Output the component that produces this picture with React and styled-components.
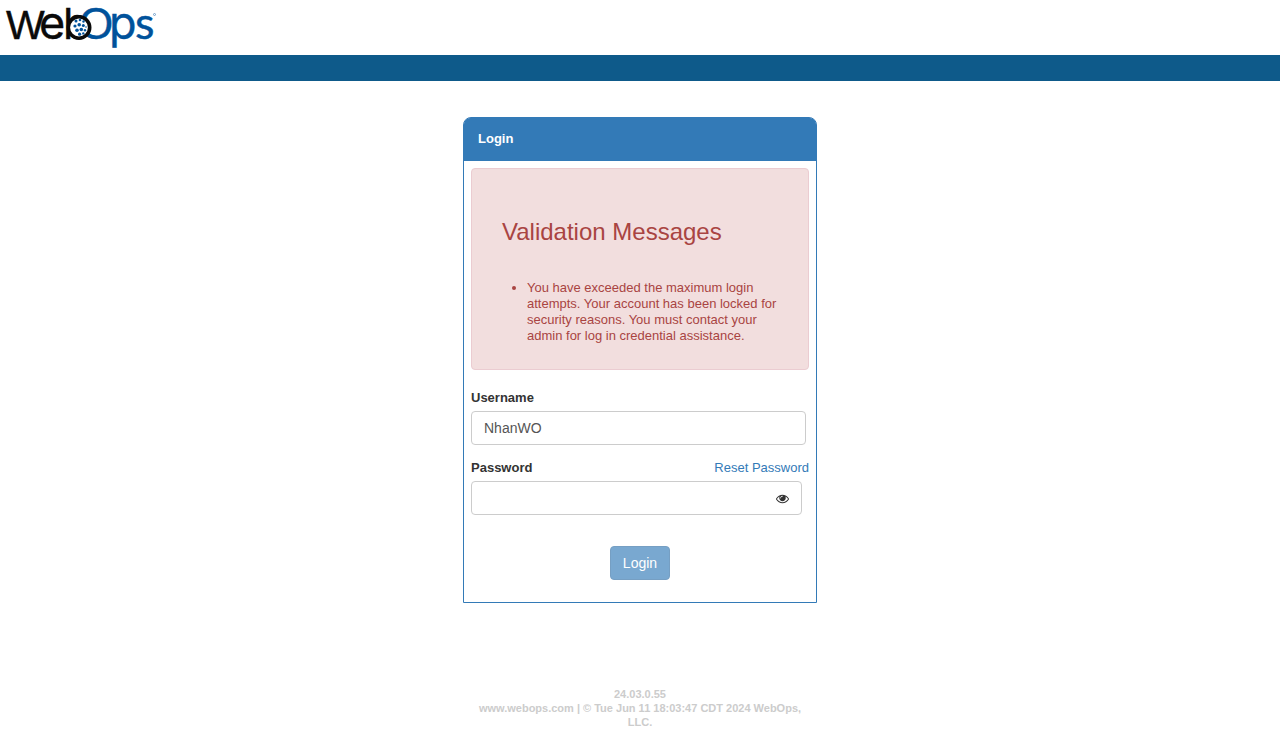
import React, { useState } from "react";
import styled, { createGlobalStyle } from "styled-components";

const GlobalStyle = createGlobalStyle`
  *, *::before, *::after { box-sizing: border-box; }
  body {
    margin: 0;
    background: #fff;
    color: #333;
    font: 13px/16px "Liberation Sans", Arial, Helvetica, sans-serif;
  }
`;

const Header = styled.header`
  display: flex;
  height: 55px;
`;

const LogoMark = styled.svg`
  overflow: visible;
  font-family: Inter, sans-serif;
  font-size: 45px;
`;

const NavBar = styled.nav`
  height: 26px;
  background: #0e5a8a;
`;

const Main = styled.main`
  display: flex;
  flex-direction: column;
  align-items: center;
  padding-top: 36px;
`;

const Panel = styled.section`
  width: 354px;
  max-width: 100%;
  border: 1px solid #337ab7;
  border-radius: 8px 8px 0 0;
`;

const PanelTitle = styled.h1`
  margin: 0;
  padding: 13px 14px 14px;
  background: #337ab7;
  border-radius: 6px 6px 0 0;
  color: #fff;
  font-size: 13px;
  line-height: 16px;
`;

const PanelBody = styled.form`
  padding: 7px 7px 22px;
`;

const Alert = styled.div`
  padding: 50px 30px 25px;
  border: 1px solid #ebccd1;
  border-radius: 4px;
  background: #f2dede;
  color: #a94442;
`;

const AlertTitle = styled.h2`
  margin: 0 0 35px;
  font-size: 24px;
  font-weight: 400;
  line-height: 26px;
`;

const AlertList = styled.ul`
  margin: 0;
  padding-left: 25px;
`;

const Field = styled.div`
  margin-top: ${(p) => p.$gap};
`;

const FieldHead = styled.div`
  display: flex;
  justify-content: space-between;
  margin-bottom: 5px;
`;

const Label = styled.label`
  font-weight: 700;
`;

const ResetLink = styled.a`
  color: #337ab7;
  text-decoration: none;
`;

const InputBox = styled.div`
  display: flex;
  align-items: center;
  height: 34px;
  margin-right: ${(p) => p.$inset};
  border: 1px solid #ccc;
  border-radius: 4px;
`;

const Input = styled.input`
  flex: 1;
  min-width: 0;
  height: 100%;
  padding: 0 12px;
  border: 0;
  outline: 0;
  background: transparent;
  color: #555;
  font: 14px/20px "Liberation Sans", Arial, sans-serif;
`;

const EyeButton = styled.button`
  display: flex;
  margin-right: 12px;
  padding: 0;
  border: 0;
  background: none;
  color: #333;
  cursor: pointer;
`;

const Actions = styled.div`
  display: flex;
  justify-content: center;
  margin-top: 31px;
`;

const LoginButton = styled.button`
  width: 60px;
  height: 34px;
  padding: 0;
  border: 1px solid #2e6da4;
  border-radius: 4px;
  background: #337ab7;
  color: #fff;
  font: 14px/20px "Liberation Sans", Arial, sans-serif;
  opacity: 0.65;
`;

const Footer = styled.footer`
  width: 324px;
  max-width: 100%;
  margin-top: 84px;
  color: #ccc;
  font-size: 11px;
  font-weight: 700;
  line-height: 14px;
  text-align: center;
`;

const dots = [
  [76, 21, 1.5], [80, 20, 1.3], [83.5, 21.5, 1.2],
  [75, 26, 1.6], [79.2, 24.8, 1.8], [83.3, 25.5, 1.5], [86, 27, 0.8],
  [77, 30.3, 1.8], [81.3, 29.5, 1.8], [85, 30.3, 1.2],
  [79.6, 34.2, 1.6], [83.3, 33.4, 1.2],
];

function Logo() {
  return (
    <LogoMark width="160" height="55" viewBox="0 0 160 55" role="img" aria-label="WebOps">
      <g fill="#0a0a0a" stroke="#0a0a0a" strokeWidth="0.4">
        <text x="6" y="39" fontFamily="Liberation Sans, sans-serif" fontSize="41">W</text>
        <text x="39" y="39">e</text>
        <text x="63" y="39" fontSize="43">b</text>
      </g>
      <g fill="#00529b" stroke="#00529b" strokeWidth="0.4">
        <text x="79" y="39" fontFamily="Liberation Sans, sans-serif" fontSize="44">O</text>
        <text x="109" y="39">p</text>
        <text x="135" y="39" fontFamily="Lato, sans-serif">s</text>
      </g>
      <circle cx="79" cy="27.500" r="10.700" fill="#fff" stroke="#0a0a0a" strokeWidth="3.600" />
      <g fill="#00529b">
        {dots.map(([x, y, r]) => <circle key={`${x}-${y}`} cx={x} cy={y} r={r} />)}
      </g>
      <circle cx="154.500" cy="14.500" r="1" fill="none" stroke="#5b8fc0" strokeWidth="0.8" />
    </LogoMark>
  );
}

function Eye() {
  return (
    <svg width="13" height="13" viewBox="0 0 1792 1792" fill="currentColor" aria-hidden="true">
      <path d="M1664 960q-152-236-381-353 61 104 61 225 0 185-131.500 316.500t-316.500 131.500-316.500-131.500-131.500-316.500q0-121 61-225-229 117-381 353 133 205 333.500 326.500t434.500 121.500 434.500-121.500 333.500-326.500zm-720-384q0-20-14-34t-34-14q-125 0-214.500 89.500t-89.500 214.500q0 20 14 34t34 14 34-14 14-34q0-86 61-147t147-61q20 0 34-14t14-34zm848 384q0 34-20 69-140 230-376.500 368.500t-499.500 138.500-499.500-139-376.500-368q-20-35-20-69t20-69q140-229 376.500-368t499.500-139 499.500 139 376.500 368q20 35 20 69z" />
    </svg>
  );
}

export default function App() {
  const [visible, setVisible] = useState(false);
  return (
    <>
      <GlobalStyle />
      <Header><Logo /></Header>
      <NavBar aria-label="Main" />
      <Main>
        <Panel>
          <PanelTitle>Login</PanelTitle>
          <PanelBody onSubmit={(e) => e.preventDefault()}>
            <Alert role="alert">
              <AlertTitle>Validation Messages</AlertTitle>
              <AlertList>
                <li>
                  You have exceeded the maximum login attempts. Your account has been
                  locked for security reasons. You must contact your admin for log in
                  credential assistance.
                </li>
              </AlertList>
            </Alert>
            <Field $gap="20px">
              <FieldHead>
                <Label htmlFor="username">Username</Label>
              </FieldHead>
              <InputBox $inset="3px">
                <Input id="username" type="text" defaultValue="NhanWO" />
              </InputBox>
            </Field>
            <Field $gap="15px">
              <FieldHead>
                <Label htmlFor="password">Password</Label>
                <ResetLink href="#reset">Reset Password</ResetLink>
              </FieldHead>
              <InputBox $inset="7px">
                <Input id="password" type={visible ? "text" : "password"} />
                <EyeButton type="button" aria-label="Show password" onClick={() => setVisible(!visible)}>
                  <Eye />
                </EyeButton>
              </InputBox>
            </Field>
            <Actions>
              <LoginButton type="submit" disabled>Login</LoginButton>
            </Actions>
          </PanelBody>
        </Panel>
        <Footer>
          <div>24.03.0.55</div>
          <div>www.webops.com | © Tue Jun 11 18:03:47 CDT 2024 WebOps, LLC.</div>
        </Footer>
      </Main>
    </>
  );
}
